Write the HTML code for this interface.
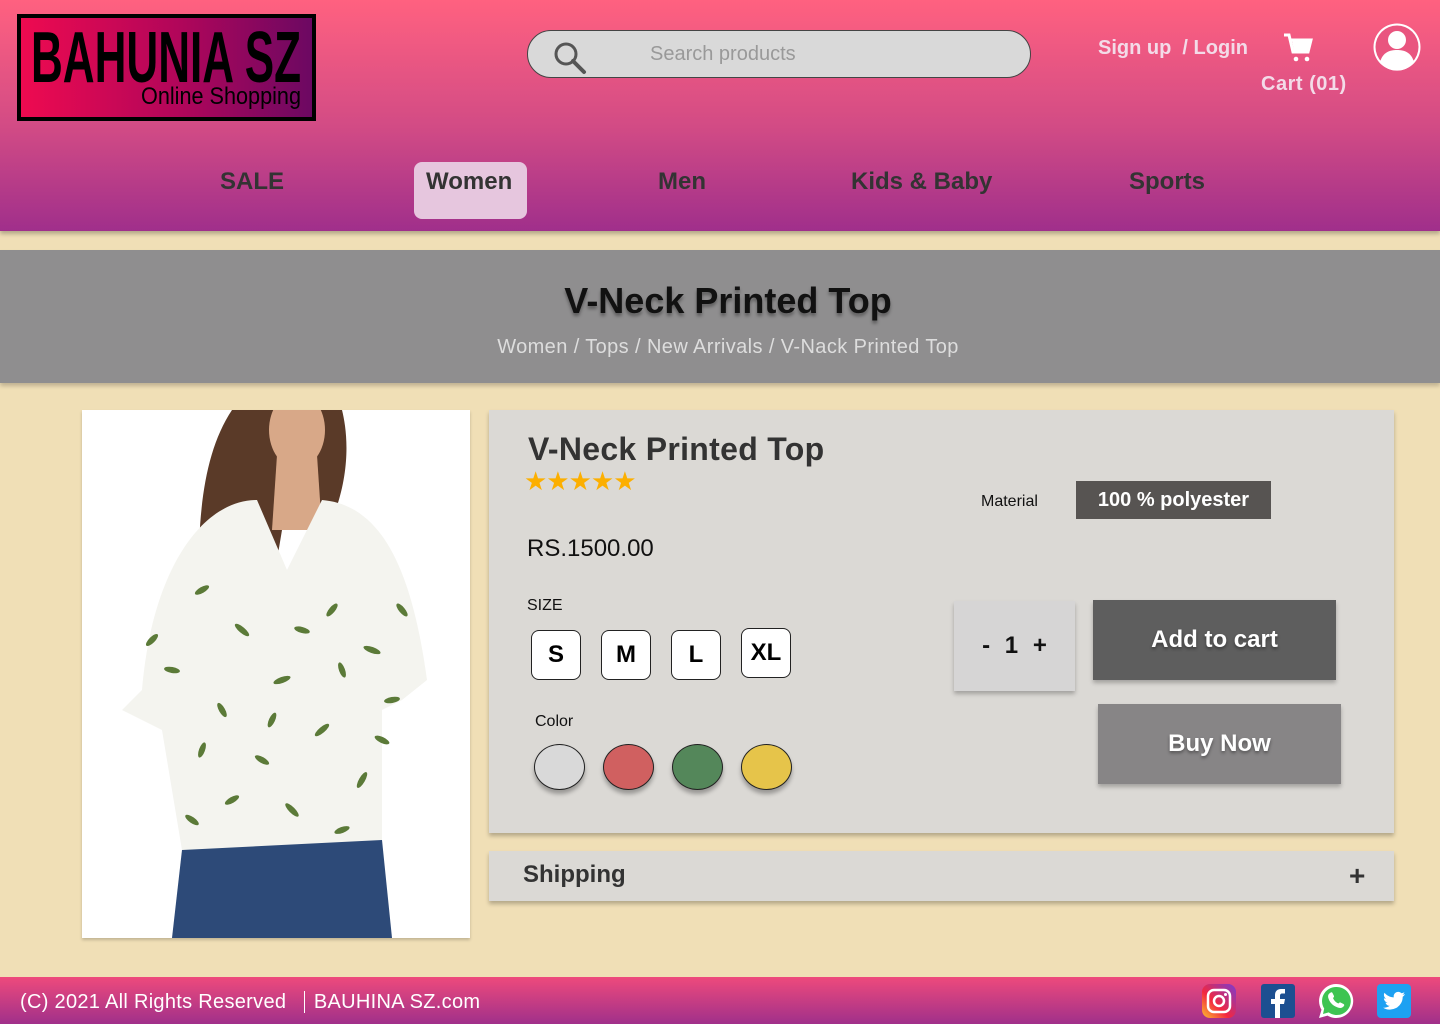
<!DOCTYPE html>
<html><head><meta charset="utf-8"><style>
*{margin:0;padding:0;box-sizing:border-box}
body{width:1440px;height:1024px;position:relative;overflow:hidden;background:#f0dfb6;font-family:"Liberation Sans",sans-serif}
.abs{position:absolute}
header{position:absolute;left:0;top:0;width:1440px;height:231px;background:linear-gradient(#ff6180,#d24b85 55%,#a02f8b);box-shadow:0 3px 4px rgba(0,0,0,.25)}
.nav{position:absolute;top:168px;font-weight:bold;font-size:24px;color:#333}
.btn{position:absolute;display:flex;align-items:center;justify-content:center;font-weight:bold;color:#fff;text-shadow:0 2px 3px rgba(0,0,0,.4);box-shadow:0 3px 4px rgba(0,0,0,.25)}
.sz{position:absolute;top:630px;width:50px;height:50px;border:1.5px solid #222;border-radius:8px;background:#fff;display:flex;align-items:center;justify-content:center;font-weight:bold;font-size:24px}
.cl{position:absolute;top:744px;width:51px;height:46px;border-radius:50%;border:1.5px solid #222;box-shadow:0 4px 4px rgba(0,0,0,.3)}
</style></head><body>
<header>
 <div class="abs" style="left:17px;top:14px;width:299px;height:107px;background:linear-gradient(90deg,#ee0a50,#b0065a 55%,#6c0862);border:4px solid #000;"></div>
 <svg class="abs" style="left:17px;top:14px" width="299" height="107" viewBox="0 0 299 107">
  <text x="14" y="68" textLength="270" lengthAdjust="spacingAndGlyphs" font-family="Liberation Sans, sans-serif" font-weight="bold" font-size="72" fill="#000">BAHUNIA SZ</text>
  <text x="124" y="90" textLength="160" lengthAdjust="spacingAndGlyphs" font-family="Liberation Sans, sans-serif" font-size="24" fill="#000">Online Shopping</text>
 </svg>
 <div class="abs" style="left:527px;top:30px;width:504px;height:48px;border:1.5px solid #444;border-radius:24px;background:#d9d9d9"></div>
 <svg class="abs" style="left:552px;top:40px" width="36" height="36" viewBox="0 0 36 36"><circle cx="14" cy="14" r="10" fill="none" stroke="#555" stroke-width="3"/><path d="M21 21 L32 32" stroke="#555" stroke-width="4" stroke-linecap="round"/></svg>
 <div class="abs" style="left:650px;top:43px;font-size:20px;color:#999">Search products</div>
 <div class="abs" style="left:1098px;top:37px;font-size:20px;font-weight:bold;color:#f3dbe8">Sign up&nbsp; / Login</div>
 <svg class="abs" style="left:1282px;top:32px" width="32" height="30" viewBox="0 0 32 30"><path d="M2 3h5l4 17h15l3-12H9" fill="none" stroke="#fff" stroke-width="3"/><path d="M10 9h18l-3 10H12z" fill="#fff"/><circle cx="14" cy="27" r="2.3" fill="#fff"/><circle cx="25" cy="27" r="2.3" fill="#fff"/></svg>
 <div class="abs" style="left:1261px;top:73px;font-size:20px;font-weight:bold;color:#f3dbe8;letter-spacing:.5px">Cart (01)</div>
 <svg class="abs" style="left:1372px;top:22px" width="50" height="50" viewBox="0 0 50 50"><circle cx="25" cy="25" r="23.5" fill="#fff"/><circle cx="25" cy="25" r="21.5" fill="#e9557f"/><circle cx="25" cy="18" r="9" fill="#fff"/><path d="M8 40c3-10 10-12 17-12s14 2 17 12a21 21 0 0 1-34 0z" fill="#fff"/></svg>
 <div class="nav" style="left:220px">SALE</div>
 <div class="abs" style="left:414px;top:162px;width:113px;height:57px;background:#e6c6de;border-radius:8px"></div>
 <div class="nav" style="left:426px">Women</div>
 <div class="nav" style="left:658px">Men</div>
 <div class="nav" style="left:851px">Kids &amp; Baby</div>
 <div class="nav" style="left:1129px">Sports</div>
</header>
<div class="abs" style="left:0;top:250px;width:1440px;height:133px;background:#8f8e8f;box-shadow:0 3px 4px rgba(0,0,0,.2)"></div>
<div class="abs" style="left:0;top:280px;width:1456px;text-align:center;font-size:36px;font-weight:bold;color:#111;text-shadow:0 3px 3px rgba(0,0,0,.35)">V-Neck Printed Top</div>
<div class="abs" style="left:0;top:336px;width:1456px;text-align:center;font-size:20px;color:#ddd;letter-spacing:.4px">Women / Tops / New Arrivals / V-Nack Printed Top</div>

<div class="abs" style="left:82px;top:410px;width:388px;height:528px;background:#fff;box-shadow:0 2px 3px rgba(0,0,0,.2);overflow:hidden">
<svg width="388" height="528" viewBox="0 0 388 528">
 <path d="M150 0 C110 60 115 160 120 260 L180 240 L200 120 L250 110 C270 60 265 20 260 0z" fill="#5a3a28"/>
 <ellipse cx="215" cy="20" rx="28" ry="38" fill="#d8a888"/>
 <path d="M195 45 L235 45 L240 120 L190 120z" fill="#d8a888"/>
 <path d="M60 280 C70 160 120 90 175 90 L205 160 L240 90 C300 95 330 160 345 270 L320 290 L300 300 L300 440 L100 440 L80 320 L40 300z" fill="#f4f4ef"/>
 <path d="M100 440 L300 430 L310 528 L90 528z" fill="#2d4a78"/>
 <g fill="#5b7a38">
  <ellipse cx="120" cy="180" rx="8" ry="3" transform="rotate(-30 120 180)"/><ellipse cx="160" cy="220" rx="9" ry="3" transform="rotate(40 160 220)"/><ellipse cx="250" cy="200" rx="8" ry="3" transform="rotate(-50 250 200)"/><ellipse cx="290" cy="240" rx="9" ry="3" transform="rotate(20 290 240)"/><ellipse cx="200" cy="270" rx="9" ry="3" transform="rotate(-20 200 270)"/><ellipse cx="140" cy="300" rx="8" ry="3" transform="rotate(60 140 300)"/><ellipse cx="240" cy="320" rx="9" ry="3" transform="rotate(-40 240 320)"/><ellipse cx="180" cy="350" rx="8" ry="3" transform="rotate(30 180 350)"/><ellipse cx="280" cy="370" rx="9" ry="3" transform="rotate(-60 280 370)"/><ellipse cx="90" cy="260" rx="8" ry="3" transform="rotate(10 90 260)"/><ellipse cx="310" cy="290" rx="8" ry="3" transform="rotate(-10 310 290)"/><ellipse cx="210" cy="400" rx="9" ry="3" transform="rotate(45 210 400)"/><ellipse cx="150" cy="390" rx="8" ry="3" transform="rotate(-30 150 390)"/><ellipse cx="260" cy="260" rx="8" ry="3" transform="rotate(70 260 260)"/><ellipse cx="120" cy="340" rx="8" ry="3" transform="rotate(-70 120 340)"/><ellipse cx="220" cy="220" rx="8" ry="3" transform="rotate(15 220 220)"/><ellipse cx="70" cy="230" rx="8" ry="3" transform="rotate(-45 70 230)"/><ellipse cx="320" cy="200" rx="8" ry="3" transform="rotate(50 320 200)"/><ellipse cx="260" cy="420" rx="8" ry="3" transform="rotate(-20 260 420)"/><ellipse cx="110" cy="410" rx="8" ry="3" transform="rotate(35 110 410)"/><ellipse cx="190" cy="310" rx="8" ry="3" transform="rotate(-65 190 310)"/><ellipse cx="300" cy="330" rx="8" ry="3" transform="rotate(25 300 330)"/>
 </g>
</svg></div>

<div class="abs" style="left:489px;top:410px;width:905px;height:423px;background:#dbd9d5;box-shadow:0 3px 4px rgba(0,0,0,.25)"></div>
<div class="abs" style="left:528px;top:431px;font-size:32px;font-weight:bold;color:#333;letter-spacing:.3px">V-Neck Printed Top</div>
<div class="abs" style="left:524px;top:466px;font-size:26px;color:#fcaf00;letter-spacing:-1px">★★★★★</div>
<div class="abs" style="left:527px;top:535px;font-size:24px;color:#111">RS.1500.00</div>
<div class="abs" style="left:527px;top:597px;font-size:16px;color:#111">SIZE</div>
<div class="sz" style="left:531px">S</div>
<div class="sz" style="left:601px">M</div>
<div class="sz" style="left:671px">L</div>
<div class="sz" style="left:741px;top:628px">XL</div>
<div class="abs" style="left:535px;top:713px;font-size:16px;color:#111">Color</div>
<div class="cl" style="left:534px;background:#d9d9d9"></div>
<div class="cl" style="left:603px;background:#d06060"></div>
<div class="cl" style="left:672px;background:#54875a"></div>
<div class="cl" style="left:741px;background:#e6c44a"></div>
<div class="abs" style="left:981px;top:493px;font-size:16px;color:#111">Material</div>
<div class="abs" style="left:1076px;top:481px;width:195px;height:38px;background:#575452;color:#fff;font-weight:bold;font-size:20px;display:flex;align-items:center;justify-content:center">100 % polyester</div>
<div class="abs" style="left:954px;top:601px;width:121px;height:90px;background:#d6d5d5;box-shadow:0 3px 4px rgba(0,0,0,.25);display:flex;align-items:center;justify-content:center;font-weight:bold;font-size:24px;color:#111;word-spacing:8px">- 1 +</div>
<div class="btn" style="left:1093px;top:600px;width:243px;height:80px;background:#5e5e5e;font-size:24px">Add to cart</div>
<div class="btn" style="left:1098px;top:704px;width:243px;height:80px;background:#878586;font-size:24px">Buy Now</div>

<div class="abs" style="left:489px;top:851px;width:905px;height:50px;background:#dbd9d5;box-shadow:0 3px 4px rgba(0,0,0,.25)"></div>
<div class="abs" style="left:523px;top:861px;font-size:24px;font-weight:bold;color:#333">Shipping</div>
<div class="abs" style="left:1349px;top:860px;font-size:28px;font-weight:bold;color:#333">+</div>

<div class="abs" style="left:0;top:977px;width:1440px;height:47px;background:linear-gradient(#ee4a7c,#a0308a)"></div>
<div class="abs" style="left:20px;top:991px;font-size:20px;color:#fff;letter-spacing:.3px">(C) 2021 All Rights Reserved&nbsp;&nbsp; <span style="border-left:1.5px solid #fff;padding-left:9px">BAUHINA SZ.com</span></div>
<svg class="abs" style="left:1202px;top:984px" width="34" height="34" viewBox="0 0 34 34"><defs><linearGradient id="ig" x1="0" y1="1" x2="1" y2="0"><stop offset="0" stop-color="#fdc02f"/><stop offset=".4" stop-color="#f3273f"/><stop offset="1" stop-color="#7a3bd0"/></linearGradient></defs><rect width="34" height="34" rx="8" fill="url(#ig)"/><rect x="6" y="6" width="22" height="22" rx="6" fill="none" stroke="#fff" stroke-width="2.5"/><circle cx="17" cy="17" r="5" fill="none" stroke="#fff" stroke-width="2.5"/><circle cx="23.5" cy="10.5" r="1.5" fill="#fff"/></svg>
<svg class="abs" style="left:1261px;top:984px" width="34" height="34" viewBox="0 0 34 34"><rect width="34" height="34" rx="3" fill="#1c4f91"/><path d="M19 34V20h4l1-5h-5v-3c0-1.5.5-2.5 2.5-2.5H24V5h-4c-4 0-6 2.5-6 6v4h-4v5h4v14z" fill="#fff"/></svg>
<svg class="abs" style="left:1317px;top:982px" width="38" height="38" viewBox="0 0 38 38"><path d="M19 2a17 17 0 0 0-14.5 25.8L2 36l8.5-2.4A17 17 0 1 0 19 2z" fill="#fff"/><path d="M19 5a14 14 0 0 0-11.8 21.5L6 32l5.7-1.6A14 14 0 1 0 19 5z" fill="#3ec452"/><path d="M13 11c1-1 2-1 2.5 0l1.5 3c.3.8-.5 1.5-1 2 1 2.5 3 4.5 5.5 5.5.5-.5 1.2-1.3 2-1l3 1.5c1 .5 1 1.5 0 2.5-2 2-4 2-8 0s-6-5-7-8 0-4.5 1.5-5.5z" fill="#fff"/></svg>
<svg class="abs" style="left:1377px;top:984px" width="34" height="34" viewBox="0 0 34 34"><rect width="34" height="34" rx="4" fill="#1da1f2"/><path d="M28 10c-.8.4-1.7.6-2.6.7.9-.6 1.6-1.4 2-2.5-.9.5-1.9.9-2.9 1.1a4.5 4.5 0 0 0-7.7 4.1c-3.8-.2-7.1-2-9.3-4.7-1.2 2.1-.5 4.7 1.4 6-.7 0-1.4-.2-2-.6 0 2.2 1.6 4.1 3.6 4.5-.7.2-1.4.2-2 .1.6 1.8 2.3 3.1 4.2 3.1A9 9 0 0 1 6 23.6 12.8 12.8 0 0 0 25.7 12.8c.9-.6 1.7-1.5 2.3-2.8z" fill="#fff"/></svg>
</body></html>
